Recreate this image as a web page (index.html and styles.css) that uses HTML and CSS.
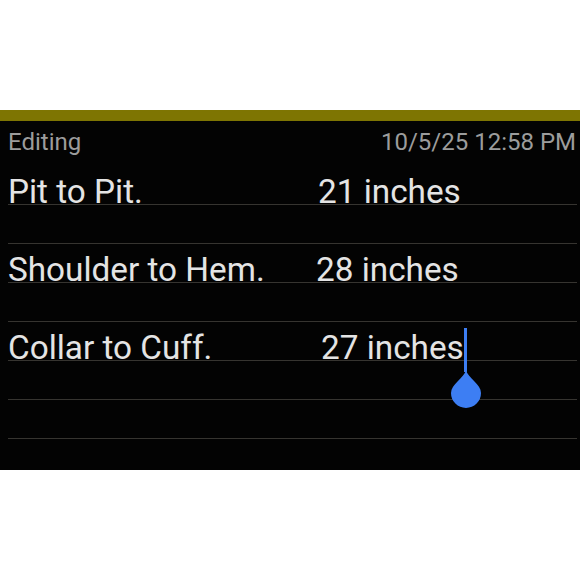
FILE: index.html
```html
<!DOCTYPE html>
<html lang="en">
<head>
    <meta charset="UTF-8">
    <meta name="viewport" content="width=device-width, initial-scale=1.0">
    <title>Measurements</title>
    <link rel="stylesheet" href="styles.css">
</head>
<body>
    <div class="top-space"></div>
    <div class="accent-bar"></div>
    <div class="note">
        <div class="meta">
            <span class="status">Editing</span>
            <span class="stamp">10/5/25 12:58 PM</span>
        </div>
        <div class="lines">
            <div class="row">
                <span class="label">Pit to Pit.</span>
                <span class="value">21 inches</span>
            </div>
            <div class="row"></div>
            <div class="row">
                <span class="label">Shoulder to Hem.</span>
                <span class="value nudge-left">28 inches</span>
            </div>
            <div class="row"></div>
            <div class="row">
                <span class="label">Collar to Cuff.</span>
                <span class="value nudge-right">27 inches<span class="caret"><span class="caret-line"></span><svg class="caret-handle" viewBox="0 0 30 38" width="30" height="38"><path d="M15 0 C17 8 30 14 30 23 A15 15 0 0 1 0 23 C0 14 13 8 15 0 Z" fill="#3d7ef3"/></svg></span></span>
            </div>
            <div class="row"></div>
            <div class="row"></div>
        </div>
    </div>
</body>
</html>
```

FILE: styles.css
```css
body {
    margin: 0;
    background: #fff;
    font-family: Roboto, "Noto Sans", sans-serif;
}

.top-space {
    height: 110px;
}

.accent-bar {
    height: 11px;
    background: #7e7502;
}

.note {
    background: #030303;
    height: 349px;
}

.meta {
    display: flex;
    justify-content: space-between;
    padding: 9px 4px 12px 8px;
    font-size: 24px;
    line-height: 24px;
    color: #9c9c9c;
}

.lines {
    margin: 0 3px 0 8px;
}

.row {
    display: flex;
    align-items: flex-end;
    height: 39px;
    box-sizing: border-box;
    border-bottom: 1px solid #363430;
    font-size: 33.3px;
    line-height: 25px;
    color: #e4e4e4;
}

.label {
    flex: 0 0 310px;
}

.value {
    position: relative;
}

.value.nudge-left {
    margin-left: -2px;
}

.value.nudge-right {
    margin-left: 3px;
}

.caret {
    position: relative;
    display: inline-block;
    width: 0;
    height: 25px;
}

.caret-line {
    position: absolute;
    left: 0;
    top: -6px;
    width: 3px;
    height: 44px;
    background: #3d7ef3;
}

.caret-handle {
    position: absolute;
    left: -13px;
    top: 36px;
}
```
